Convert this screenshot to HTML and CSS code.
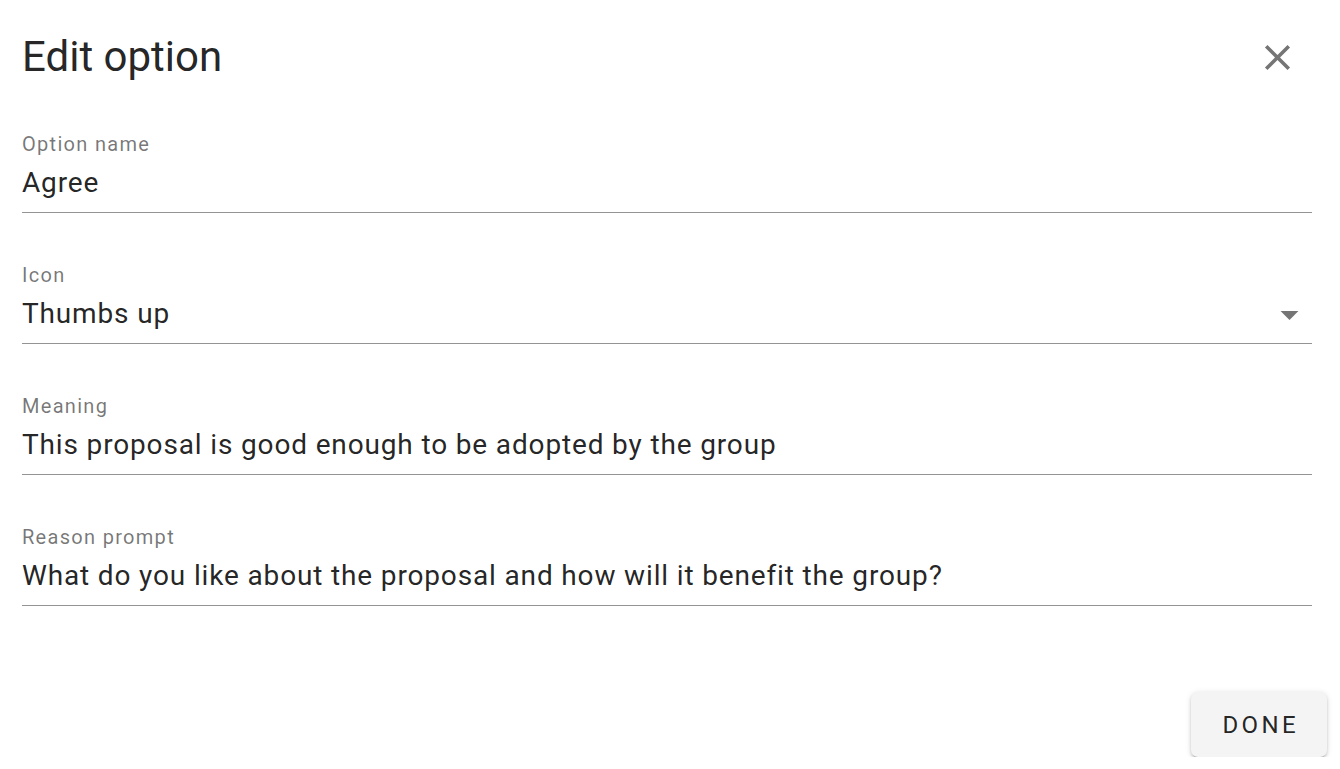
FILE: index.html
```html
<!DOCTYPE html>
<html lang="en">
<head>
<meta charset="utf-8">
<title>Edit option</title>
<link rel="stylesheet" href="styles.css">
</head>
<body>
<div class="dialog">
  <div class="header">
    <h1 class="title">Edit option</h1>
    <button class="close" aria-label="Close">
      <svg viewBox="0 0 24 24" width="43" height="43"><path d="M19 6.41L17.59 5 12 10.59 6.41 5 5 6.41 10.59 12 5 17.59 6.41 19 12 13.41 17.59 19 19 17.59 13.41 12z" fill="#757575"/></svg>
    </button>
  </div>
  <div class="field">
    <div class="label">Option name</div>
    <div class="value">Agree</div>
  </div>
  <div class="field">
    <div class="label">Icon</div>
    <div class="value select">
      <span>Thumbs up</span>
      <svg class="arrow" viewBox="0 0 24 24" width="43" height="43"><path d="M7 10l5 5 5-5z" fill="#757575"/></svg>
    </div>
  </div>
  <div class="field">
    <div class="label">Meaning</div>
    <div class="value">This proposal is good enough to be adopted by the group</div>
  </div>
  <div class="field">
    <div class="label">Reason prompt</div>
    <div class="value">What do you like about the proposal and how will it benefit the group?</div>
  </div>
  <div class="footer">
    <button class="done">DONE</button>
  </div>
</div>
</body>
</html>
```

FILE: styles.css
```css
html, body {
  margin: 0;
  padding: 0;
  background: #ffffff;
}
body {
  font-family: Roboto, "Noto Sans", sans-serif;
  color: rgba(0, 0, 0, 0.87);
}
.dialog {
  padding: 33px 28px 0 22px;
}
.header {
  display: flex;
  align-items: center;
  justify-content: space-between;
  height: 48px;
  margin-bottom: 51px;
}
.title {
  margin: 0;
  font-size: 42px;
  font-weight: 400;
  line-height: 48px;
}
.close {
  border: 0;
  background: none;
  padding: 0;
  margin-right: 13px;
  width: 43px;
  height: 43px;
  display: flex;
  align-items: center;
  justify-content: center;
  cursor: pointer;
}
.close svg { display: block; }
.field {
  border-bottom: 1px solid #949494;
  padding-bottom: 11px;
  margin-bottom: 50px;
}
.label {
  font-size: 20px;
  line-height: 24px;
  letter-spacing: 1.3px;
  color: rgba(0, 0, 0, 0.54);
  margin-bottom: 9px;
}
.value {
  font-size: 28px;
  line-height: 36px;
  letter-spacing: 0.85px;
  color: rgba(0, 0, 0, 0.87);
}
.select {
  display: flex;
  align-items: center;
  justify-content: space-between;
}
.arrow {
  display: block;
  margin-right: 1px;
  margin-top: -7px;
  margin-bottom: -7px;
}
.footer {
  display: flex;
  justify-content: flex-end;
  margin-top: 86px;
  margin-right: -15px;
}
.done {
  width: 136px;
  height: 65px;
  border: 0;
  border-radius: 7px;
  background: #f4f4f4;
  box-shadow: 0 3px 1px -2px rgba(0,0,0,0.2), 0 2px 3px 0 rgba(0,0,0,0.16), 0 1px 6px 0 rgba(0,0,0,0.12);
  font-family: Roboto, sans-serif;
  font-size: 24px;
  font-weight: 400;
  letter-spacing: 3.4px;
  text-indent: 3.4px;
  color: rgba(0, 0, 0, 0.87);
  padding: 0;
  cursor: pointer;
}
```
